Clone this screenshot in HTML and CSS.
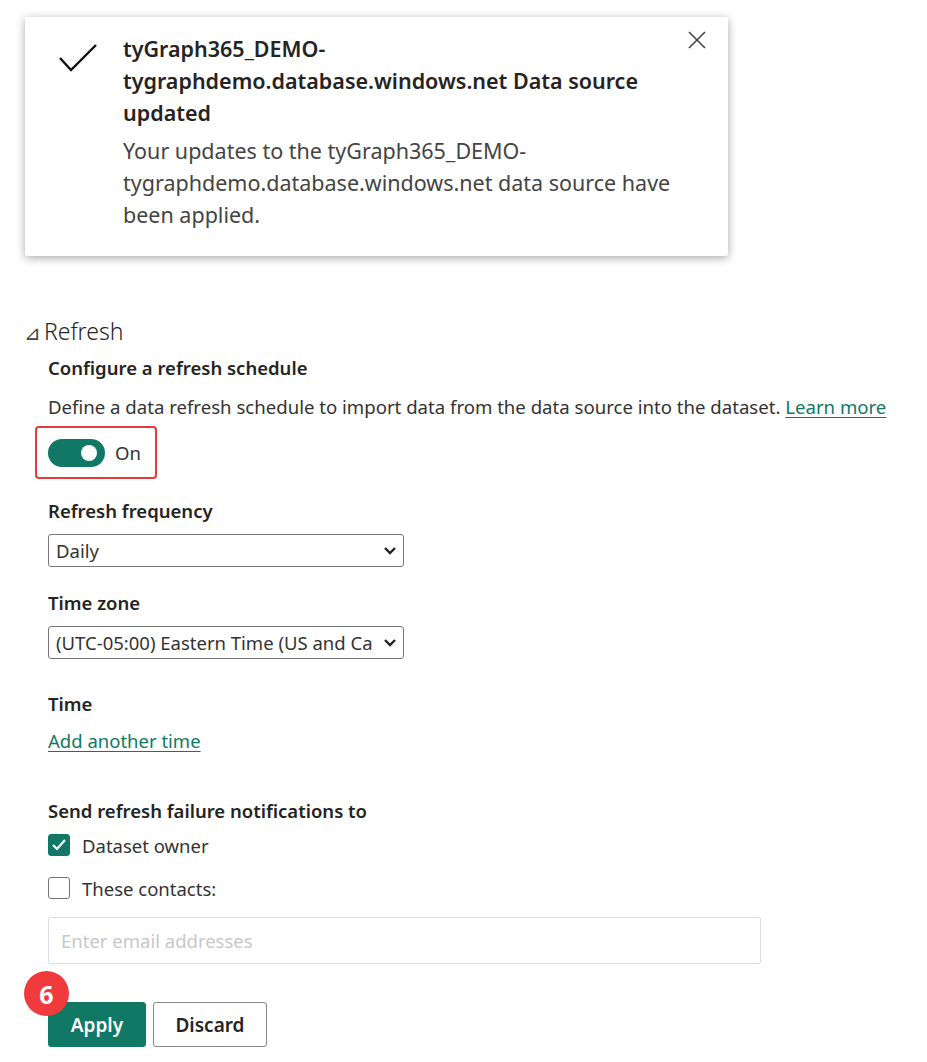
FILE: index.html
```html
<!DOCTYPE html>
<html>
<head>
<meta charset="utf-8">
<link rel="stylesheet" href="styles.css">
</head>
<body>
<div class="toast">
  <svg class="toast-check" width="40" height="30" viewBox="0 0 40 30"><path d="M2 15 L13 27 L38 2" fill="none" stroke="#111" stroke-width="2.4"/></svg>
  <div class="toast-body">
    <div class="toast-title">tyGraph365_DEMO-<br>tygraphdemo.database.windows.net Data source updated</div>
    <div class="toast-text">Your updates to the tyGraph365_DEMO-<br>tygraphdemo.database.windows.net data source have been applied.</div>
  </div>
  <svg class="toast-close" width="18" height="18" viewBox="0 0 18 18"><path d="M1 1 L17 17 M17 1 L1 17" stroke="#444" stroke-width="1.6"/></svg>
</div>

<section class="refresh">
  <div class="section-head"><span class="tri">⊿</span><span class="section-title">Refresh</span></div>
  <div class="content">
    <div class="label lbl-config">Configure a refresh schedule</div>
    <div class="desc">Define a data refresh schedule to import data from the data source into the dataset. <a class="link" href="#">Learn more</a></div>
    <div class="toggle-box">
      <span class="toggle"><span class="knob"></span></span>
      <span class="toggle-text">On</span>
    </div>

    <div class="label lbl-freq">Refresh frequency</div>
    <div class="select"><span>Daily</span><svg width="14" height="10" viewBox="0 0 14 10"><path d="M2 2 L7 7 L12 2" fill="none" stroke="#222" stroke-width="2.4"/></svg></div>

    <div class="label lbl-tz">Time zone</div>
    <div class="select"><span>(UTC-05:00) Eastern Time (US and Ca</span><svg width="14" height="10" viewBox="0 0 14 10"><path d="M2 2 L7 7 L12 2" fill="none" stroke="#222" stroke-width="2.4"/></svg></div>

    <div class="label lbl-time">Time</div>
    <a class="link add-time" href="#">Add another time</a>

    <div class="label lbl-send">Send refresh failure notifications to</div>
    <div class="check-row">
      <span class="cb checked"><svg width="16" height="14" viewBox="0 0 16 14"><path d="M2 7 L6 11 L14 2" fill="none" stroke="#fff" stroke-width="2.2"/></svg></span>
      <span class="cb-text">Dataset owner</span>
    </div>
    <div class="check-row second">
      <span class="cb"></span>
      <span class="cb-text">These contacts:</span>
    </div>
    <div class="email">Enter email addresses</div>

    <div class="buttons">
      <span class="badge">6</span>
      <button class="btn primary">Apply</button>
      <button class="btn">Discard</button>
    </div>
  </div>
</section>
</body>
</html>
```
FILE: styles.css
```css
html, body {
  margin: 0;
  padding: 0;
  background: #ffffff;
  font-family: "Noto Sans", "Open Sans", sans-serif;
  color: #252423;
}

.toast {
  margin: 17px 0 0 25px;
  width: 703px;
  height: 239px;
  box-sizing: border-box;
  background: #fff;
  box-shadow: 0 2px 10px rgba(0,0,0,0.35);
  border-radius: 2px;
  display: flex;
  align-items: flex-start;
  padding: 16px 22px 0 33px;
}
.toast-check { margin-top: 10px; flex: none; }
.toast-body { margin-left: 25px; flex: 1; min-width: 0; }
.toast-title {
  font-size: 21.5px;
  font-weight: 600;
  line-height: 32px;
  color: #252423;
  width: 540px;
}
.toast-text {
  margin-top: 6px;
  font-size: 21.5px;
  line-height: 32px;
  color: #444;
  width: 575px;
}
.toast-close { margin: -2px 0 0 0; flex: none; }

.refresh { margin-top: 59px; }
.section-head {
  display: flex;
  align-items: baseline;
  margin-left: 24px;
  height: 30px;
}
.tri { font-size: 20px; color: #444; margin-right: 3px; }
.section-title { font-size: 23px; font-weight: 300; color: #252423; }

.content { margin-left: 48px; }
.label {
  font-size: 18.5px;
  font-weight: 600;
  color: #252423;
  line-height: 24px;
}
.lbl-config { margin-top: 11px; }
.desc {
  font-size: 18.6px;
  line-height: 24px;
  color: #333;
  margin-top: 15px;
}
.link { color: #117865; text-decoration: underline; text-underline-offset: 3px; }

.toggle-box {
  display: inline-flex;
  align-items: center;
  border: 2px solid #e53a3a;
  border-radius: 4px;
  margin: 7px 0 0 -13px;
  padding: 0 14px 0 11px;
  height: 53px;
  box-sizing: border-box;
}
.toggle {
  width: 57px;
  height: 28px;
  border-radius: 14px;
  background: #117865;
  position: relative;
  display: inline-block;
}
.knob {
  position: absolute;
  right: 8px;
  top: 6px;
  width: 16px;
  height: 16px;
  border-radius: 50%;
  background: #fff;
}
.toggle-text { font-size: 18.5px; margin-left: 10px; color: #333; }

.lbl-freq { margin-top: 20px; }
.lbl-tz { margin-top: 24px; }
.lbl-time { margin-top: 33px; }
.lbl-send { margin-top: 46px; }

.select {
  margin-top: 11px;
  width: 356px;
  height: 33px;
  box-sizing: border-box;
  border: 1px solid #777;
  border-radius: 3px;
  display: flex;
  align-items: center;
  justify-content: space-between;
  padding: 0 6px 0 7px;
  font-size: 18.5px;
  color: #333;
  white-space: nowrap;
  overflow: hidden;
}

.add-time {
  display: inline-block;
  margin-top: 13px;
  font-size: 18.5px;
  line-height: 24px;
}

.check-row {
  display: flex;
  align-items: center;
  margin-top: 10px;
  height: 24px;
}
.check-row.second { margin-top: 19px; }
.cb {
  width: 22px;
  height: 22px;
  box-sizing: border-box;
  border: 1px solid #777;
  border-radius: 3px;
  display: inline-flex;
  align-items: center;
  justify-content: center;
}
.cb.checked { background: #117865; border-color: #117865; }
.cb-text { font-size: 18.5px; color: #333; margin-left: 12px; }

.email {
  margin-top: 17px;
  width: 713px;
  height: 47px;
  box-sizing: border-box;
  border: 1px solid #ddd;
  border-radius: 2px;
  padding: 0 12px;
  display: flex;
  align-items: center;
  font-size: 18.5px;
  color: #c8c8c8;
}

.buttons {
  position: relative;
  display: flex;
  gap: 7px;
  margin-top: 38px;
}
.btn {
  height: 45px;
  box-sizing: border-box;
  border: 1px solid #8a8a8a;
  border-radius: 3px;
  background: #fff;
  font-family: "Noto Sans", sans-serif;
  font-size: 19px;
  font-weight: 600;
  color: #252423;
  padding: 0;
  width: 114px;
}
.btn.primary {
  background: #117865;
  border-color: #117865;
  color: #fff;
  width: 98px;
}
.badge {
  position: absolute;
  left: -24px;
  top: -31px;
  width: 45px;
  height: 45px;
  border-radius: 50%;
  background: #ef3b3b;
  color: #fff;
  font-size: 25px;
  font-weight: 700;
  display: flex;
  align-items: center;
  justify-content: center;
  z-index: 1;
}
```
